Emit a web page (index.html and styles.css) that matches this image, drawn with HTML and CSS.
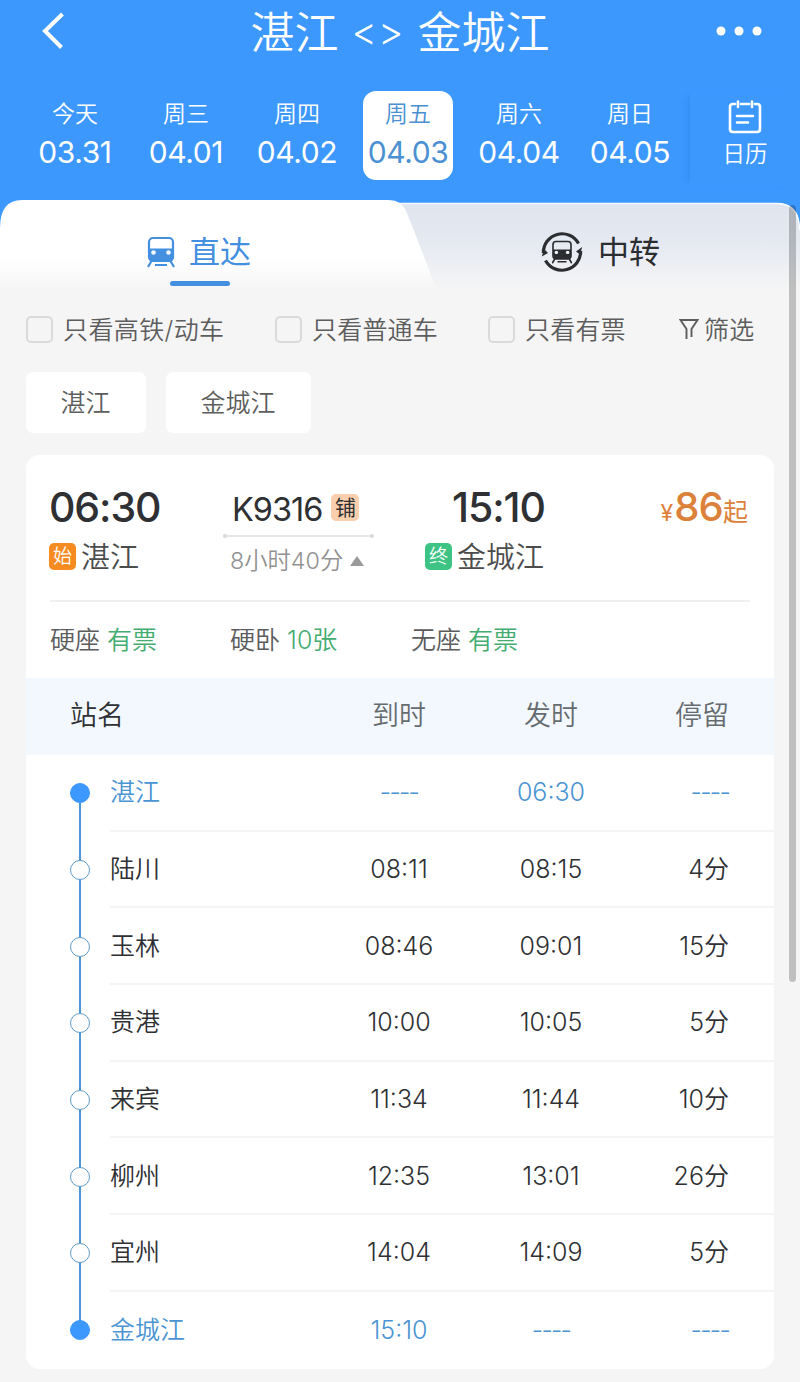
FILE: index.html
```html
<!DOCTYPE html>
<html lang="zh-CN">
<head>
<meta charset="utf-8">
<title>湛江 - 金城江</title>
<link rel="stylesheet" href="styles.css">
</head>
<body>
<svg class="defs" width="0" height="0">
  <symbol id="train" viewBox="0 0 28 32">
    <rect x="2" y="2" width="24" height="23" rx="4" fill="none" stroke="currentColor" stroke-width="2.200"/>
    <path d="M2 12.500H26V22Q26 26 22 26H6Q2 26 2 22Z" fill="currentColor"/>
    <circle class="lamp" cx="6.500" cy="16.500" r="2.300"/><circle class="lamp" cx="21.500" cy="16.500" r="2.300"/>
    <path d="M4.500 25L1 31M23.500 25L27 31M8 29H20" fill="none" stroke="currentColor" stroke-width="2.200"/>
  </symbol>
</svg>

<header class="header">
  <div class="nav">
    <svg class="back" width="30" height="40" viewBox="0 0 30 40"><path d="M25.500 3L8 20L24.500 36.500" fill="none" stroke="currentColor" stroke-width="4"/></svg>
    <h1 class="title"><span>湛江</span><span class="swap">&lt;&gt;</span><span>金城江</span></h1>
    <svg class="more" width="46" height="10" viewBox="0 0 46 10"><circle cx="5" cy="5" r="4.500"/><circle cx="23" cy="5" r="4.500"/><circle cx="41" cy="5" r="4.500"/></svg>
  </div>
  <div class="dates">
    <div class="date"><span class="day">今天</span><span class="num">03.31</span></div>
    <div class="date"><span class="day">周三</span><span class="num">04.01</span></div>
    <div class="date"><span class="day">周四</span><span class="num">04.02</span></div>
    <div class="date active"><span class="day">周五</span><span class="num">04.03</span></div>
    <div class="date"><span class="day">周六</span><span class="num">04.04</span></div>
    <div class="date"><span class="day">周日</span><span class="num">04.05</span></div>
    <div class="calendar">
      <svg width="34" height="34" viewBox="0 0 34 34" fill="none" stroke="currentColor" stroke-width="2.600" stroke-linecap="round"><path d="M7 4H5Q2 4 2 7V29Q2 32 5 32H29Q32 32 32 29V7Q32 4 29 4H27M13 4H21M10 1.500V7M24 1.500V7M9 16H25M9 22.500H20"/></svg>
      <span>日历</span>
    </div>
  </div>
</header>

<main class="sheet">
  <nav class="tabs">
    <svg class="tab-shape" width="800" height="90" viewBox="0 0 800 90">
      <defs>
        <linearGradient id="tabOff" x1="0" y1="0" x2="0" y2="1"><stop offset="0" stop-color="#dfe5ee"/><stop offset=".45" stop-color="#e5e9f1"/><stop offset="1" stop-color="#f5f5f5"/></linearGradient>
        <linearGradient id="tabOn" x1="0" y1="0" x2="0" y2="1"><stop offset="0" stop-color="#fff"/><stop offset=".65" stop-color="#fff"/><stop offset="1" stop-color="#f5f5f5"/></linearGradient>
      </defs>
      <path d="M380 3H777Q800 3 800 30V90H380Z" fill="url(#tabOff)"/>
      <path d="M395 3.500H777Q799 3.500 799.500 30" fill="none" stroke="#f8fbff" stroke-width="1.500"/>
      <path d="M0 90V28Q0 0 22 0H388Q402 0 407 13L437 90Z" fill="url(#tabOn)"/>
    </svg>
    <div class="tab on"><svg class="train" width="28" height="32"><use href="#train"/></svg><span>直达</span></div>
    <div class="tab off">
      <svg width="42" height="42" viewBox="0 0 42 42">
        <g fill="none" stroke="currentColor" stroke-width="3.200"><path d="M2.400 22A18.700 18.700 0 0 1 37.500 12.500"/><path d="M39.600 20A18.700 18.700 0 0 1 4.500 29.500"/></g>
        <path d="M.8 25.500L7 22L3 18ZM41.200 16L35 20.500L39 23.500Z" fill="currentColor"/>
        <svg x="10.500" y="9" width="21" height="24"><use href="#train"/></svg>
      </svg>
      <span>中转</span>
    </div>
  </nav>

  <div class="filters">
    <label class="check"><i></i><span class="long">只看高铁/动车</span></label>
    <label class="check second"><i></i><span>只看普通车</span></label>
    <label class="check third"><i></i><span>只看有票</span></label>
    <div class="sift"><svg width="20" height="22" viewBox="0 0 20 22" fill="none" stroke="currentColor" stroke-width="1.900"><path d="M7.500 21V11L1.500 2H18.500L12.500 11V19"/></svg><span>筛选</span></div>
  </div>

  <div class="chips"><span class="chip">湛江</span><span class="chip wide">金城江</span></div>

  <section class="card">
    <div class="trip">
      <div class="from">
        <div class="clock">06:30</div>
        <div class="place"><b class="badge start">始</b>湛江</div>
      </div>
      <div class="train-info">
        <div class="code"><span>K9316</span><b class="berth">铺</b></div>
        <div class="rule"></div>
        <div class="duration">8小时40分<i class="up"></i></div>
      </div>
      <div class="to">
        <div class="clock late">15:10</div>
        <div class="place"><b class="badge end">终</b>金城江</div>
      </div>
      <div class="price"><small class="yen">¥</small><strong>86</strong><small>起</small></div>
    </div>
    <div class="seats">
      <span>硬座 <em>有票</em></span><span>硬卧 <em>10张</em></span><span>无座 <em>有票</em></span>
    </div>
    <div class="thead"><span class="c-name">站名</span><span>到时</span><span>发时</span><span class="c-stay">停留</span></div>
    <div class="stops">
      <div class="stop terminal first"><div class="mark"><i></i></div><div class="cells"><span>湛江</span><span class="t dash">----</span><span class="t">06:30</span><span class="stay dash">----</span></div></div>
      <div class="stop"><div class="mark"><i></i></div><div class="cells"><span>陆川</span><span class="t">08:11</span><span class="t">08:15</span><span class="stay">4分</span></div></div>
      <div class="stop"><div class="mark"><i></i></div><div class="cells"><span>玉林</span><span class="t">08:46</span><span class="t">09:01</span><span class="stay">15分</span></div></div>
      <div class="stop"><div class="mark"><i></i></div><div class="cells"><span>贵港</span><span class="t">10:00</span><span class="t">10:05</span><span class="stay">5分</span></div></div>
      <div class="stop"><div class="mark"><i></i></div><div class="cells"><span>来宾</span><span class="t">11:34</span><span class="t">11:44</span><span class="stay">10分</span></div></div>
      <div class="stop"><div class="mark"><i></i></div><div class="cells"><span>柳州</span><span class="t">12:35</span><span class="t">13:01</span><span class="stay">26分</span></div></div>
      <div class="stop"><div class="mark"><i></i></div><div class="cells"><span>宜州</span><span class="t">14:04</span><span class="t">14:09</span><span class="stay">5分</span></div></div>
      <div class="stop terminal last"><div class="mark"><i></i></div><div class="cells"><span>金城江</span><span class="t">15:10</span><span class="t dash">----</span><span class="stay dash">----</span></div></div>
    </div>
  </section>
</main>
<div class="scrollbar"></div>
</body>
</html>
```

FILE: styles.css
```css
* { box-sizing: border-box; }
body {
  margin: 0;
  position: relative;
  width: 800px;
  height: 1382px;
  overflow: hidden;
  background: #f5f5f5;
  color: #2e3033;
  font-family: Inter, "Noto Sans CJK SC", sans-serif;
  font-weight: 350;
  line-height: 1;
}
.defs { position: absolute; }
.lamp { fill: #f4f8fc; }
i, em { font-style: normal; }

.header { height: 230px; background: #3c98fd; color: #fff; }
.nav { display: grid; grid-template-columns: 120px 1fr 120px; align-items: center; height: 66px; }
.back { margin-left: 37px; margin-top: -4px; }
.title { margin: 0; display: flex; justify-content: center; align-items: center; gap: 13px; font-size: 44px; font-weight: 350; white-space: nowrap; }
.swap { margin: -4px 0 0; font-size: 39px; letter-spacing: 1px; }
.more { fill: #fff; margin-left: 36px; margin-top: -4px; }
.dates { display: flex; padding: 25px 0 0 30px; }
.date { width: 90px; height: 89px; margin-right: 21px; padding-top: 11px; display: flex; flex-direction: column; align-items: center; border-radius: 13px; }
.date.active { background: #fff; color: #4a90d2; }
.day { font-size: 23px; line-height: 24px; }
.num { margin-top: 8px; font-size: 30px; line-height: 36px; font-weight: 430; letter-spacing: -.4px; }
.calendar { width: 110px; height: 96px; margin-left: -6px; display: flex; flex-direction: column; align-items: center; padding-top: 9px; gap: 9px; font-size: 22.500px; box-shadow: -7px 0 7px -6px rgba(25, 105, 210, .28); }

.sheet { margin-top: -30px; height: 1182px; border-radius: 27px 24px 0 0; }
.tabs { position: relative; display: grid; grid-template-columns: 400px 400px; height: 90px; }
.tab-shape { position: absolute; left: 0; top: 0; }
.tab { position: relative; height: 90px; display: flex; font-size: 31px; font-weight: 400; }
.tab.on { color: #438fe0; padding: 36px 0 0 147px; gap: 14px; }
.tab.on::after { content: ""; position: absolute; left: 170px; top: 81px; width: 60px; height: 5px; border-radius: 3px; background: #438fe0; }
.tab.off { color: #2b2d31; padding: 31px 0 0 141px; gap: 15px; }
.tab.off span { margin-top: 5px; }

.filters { display: flex; align-items: center; height: 78px; padding-left: 26px; font-size: 25px; color: #5d5d5d; white-space: nowrap; }
.filters span { padding-top: 2px; letter-spacing: .2px; }
.check { display: flex; align-items: center; width: 249px; }
.check i { width: 27px; height: 27px; margin-right: 10px; border: 2px solid #dadada; border-radius: 5px; }
.filters .long { letter-spacing: .4px; }
.check.second { width: 213px; }
.check.third { width: 191px; }
.sift { display: flex; align-items: center; gap: 5px; }

.chips { display: flex; gap: 20px; padding: 4px 0 0 26px; }
.chip { width: 120px; height: 61px; line-height: 62px; padding-right: 1px; text-align: center; background: #fff; border-radius: 7px; font-size: 25px; color: #5d5d5d; }
.chip.wide { width: 145px; }

.card { width: 748px; height: 914px; margin: 22px 0 0 26px; background: #fff; border-radius: 14px; overflow: hidden; }
.trip { display: grid; grid-template-columns: 174px 202px 160px 1fr; height: 147px; margin: 0 24px; padding-top: 30px; border-bottom: 2px solid #f0f0f0; }
.clock { margin-left: -1px; font-size: 41px; line-height: 44px; font-weight: 450; letter-spacing: -1.100px; }
.late { margin-left: 26px; }
.place { display: flex; align-items: center; margin: 13px 0 0 -1px; font-size: 29px; line-height: 32px; color: #4c4c4c; white-space: nowrap; }
.badge { width: 27px; height: 27px; margin: -3px 5px 0 0; border-radius: 5px; color: #fff; font-size: 19px; line-height: 27px; text-align: center; font-weight: 350; }
.start { background: #f68b22; }
.end { background: #3dc485; }
.train-info { width: 149px; }
.code { display: flex; align-items: center; gap: 9px; padding: 5px 0 0 8px; font-size: 32.500px; line-height: 40px; font-weight: 420; letter-spacing: -1px; }
.berth { width: 28px; height: 27px; margin-top: -5px; border-radius: 5px; background: #f9cfae; font-size: 21px; line-height: 27px; text-align: center; font-weight: 400; letter-spacing: 0; }
.rule { position: relative; height: 2px; margin: 5px -1px 0; background: #e6e6e6; }
.rule::before, .rule::after { content: ""; position: absolute; top: -1px; left: 0; width: 4px; height: 4px; border-radius: 50%; background: #d9d9d9; }
.rule::after { left: auto; right: 0; }
.duration { display: flex; align-items: center; padding: 11px 0 0 6px; font-size: 23.300px; line-height: 26px; color: #929292; white-space: nowrap; font-weight: 330; }
.up { margin-left: 7px; border: 7.500px solid transparent; border-bottom: 10px solid #999; border-top: 0; }
.price { display: flex; align-items: baseline; justify-content: flex-end; margin-right: 2px; height: 44px; color: #dc8139; line-height: 43px; }
.price strong { font-size: 40px; font-weight: 550; letter-spacing: -.8px; }
.price small { font-size: 25px; font-weight: 400; }
.price .yen { font-size: 23px; margin-right: 1px; }
.seats { display: grid; grid-template-columns: 180px 181px 1fr; height: 76px; padding: 1px 23px 0 24px; align-items: center; font-size: 25px; color: #5c5c5c; }
.seats em { color: #43ac70; }
.thead, .cells { display: grid; grid-template-columns: 213px 152px 152px 1fr; align-items: center; }
.thead { height: 77px; padding: 0 45px 2px 84px; background: #f3f8fe; font-size: 27px; color: #666b70; text-align: center; }
.thead .c-name { margin-left: -40px; text-align: left; color: #2e3033; }
.thead .c-stay { text-align: right; }
.stop { display: grid; grid-template-columns: 84px 1fr; height: 76.700px; }
.mark { display: flex; align-items: center; justify-content: center; padding-left: 24px; background: linear-gradient(#4d97d8, #4d97d8) 53px 0 / 2px 100% no-repeat; }
.first .mark { background-position: 53px 38px; }
.last .mark { background-size: 2px 38px; }
.mark i { width: 20px; height: 20px; border: 1.500px solid #5d9ccb; border-radius: 50%; background: #fff; }
.terminal i { background: #3c98fd; border-color: #3c98fd; }
.cells { padding: 1px 45px 0 0; font-size: 25px; border-bottom: 2px solid #f5f5f5; }
.last .cells { border: 0; padding-top: 0; }
.terminal .cells { color: #4a94d3; }
.t { text-align: center; }
.stay { text-align: right; white-space: nowrap; }
.dash { letter-spacing: -1.700px; }

.scrollbar { position: absolute; left: 789px; top: 205px; width: 7px; height: 777px; border-radius: 4px; background: rgba(0, 0, 0, .22); }
```
